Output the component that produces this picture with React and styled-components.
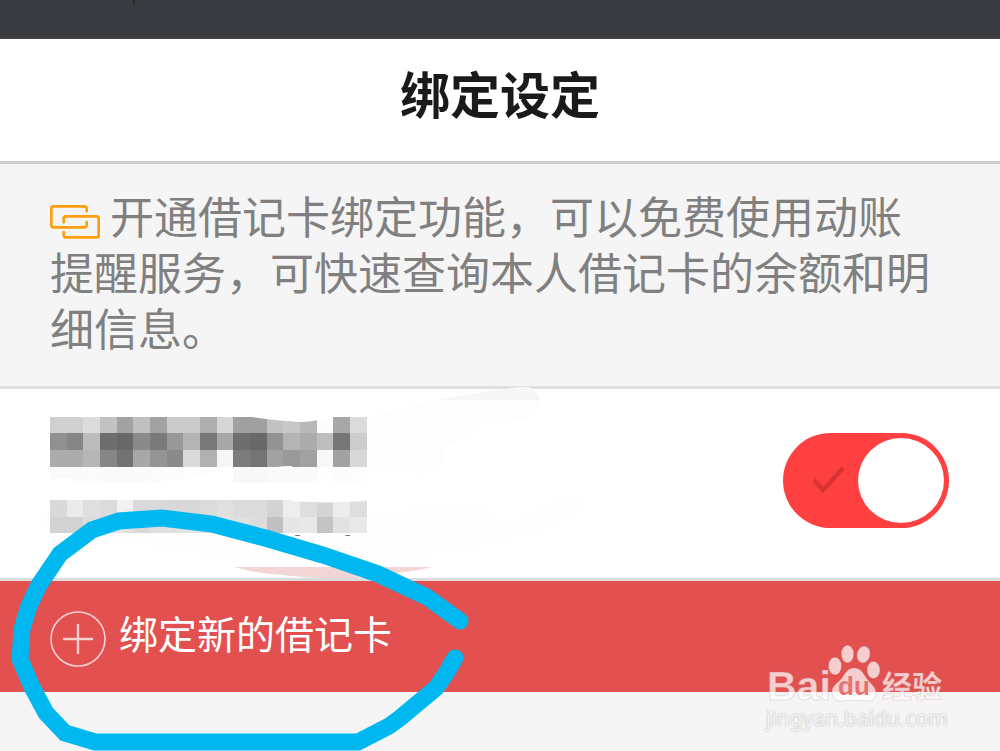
import React, { useState } from 'react';
import styled, { createGlobalStyle } from 'styled-components';

const GlobalStyle = createGlobalStyle`
  * {
    box-sizing: border-box;
  }

  body {
    margin: 0;
    background-color: #f5f5f5;
    font-family: "Noto Sans CJK SC", "Noto Sans", sans-serif;
  }
`;

const Page = styled.div`
  position: relative;
  min-height: 100vh;
  overflow: hidden;
  background-color: #f5f5f5;
`;

const StatusBar = styled.div`
  height: 39px;
  padding-left: 133px;
  background-color: #3a3b40;
  border-bottom: 1px solid #4b4850;

  /* camera notch line */
  &::before {
    content: "";
    display: block;
    width: 2px;
    height: 5px;
    background-color: #2c2d31;
  }
`;

const Header = styled.header`
  padding: 16px 50px 32px;
  background-color: #fff;
  border-bottom: 3px solid #cdcdcd;
`;

const Title = styled.h1`
  margin: 0;
  color: #1a1a1a;
  font-size: 50px;
  font-weight: 700;
  line-height: 74px;
  text-align: center;
`;

const Notice = styled.p`
  margin: 0;
  padding: 23px 56px 31px 50px;
  color: #808080;
  font-size: 44px;
  line-height: 56px;
  border-bottom: 3px solid #dfdfdf;

  svg {
    margin-right: 10px;
    vertical-align: -5px;
  }
`;

const CardRow = styled.section`
  display: flex;
  align-items: center;
  justify-content: space-between;
  padding: 0 51px 0 50px;
  background-color: #fff;
  border-bottom: 3px solid #dcdcdc;
`;

const Switch = styled.label`
  display: grid;
  flex: none;
  margin-bottom: 6px;
  cursor: pointer;

  > * {
    grid-area: 1 / 1;
  }

  svg {
    align-self: center;
    margin-left: 29px;
    pointer-events: none;
  }
`;

const SwitchInput = styled.input`
  appearance: none;
  display: flex;
  align-items: center;
  justify-content: flex-start;
  width: 166px;
  height: 95px;
  margin: 0;
  padding: 5px;
  border-radius: 48px;
  background-color: #ccc;
  cursor: pointer;

  &::before {
    content: "";
    width: 86px;
    height: 85px;
    border-radius: 50%;
    background-color: #fff;
  }

  &:checked {
    justify-content: flex-end;
    background-color: #ff4041;
  }
`;

const AddButton = styled.button`
  display: flex;
  align-items: center;
  gap: 13px;
  width: 100%;
  height: 111px;
  padding: 4px 50px 0;
  border: none;
  background-color: #e2504f;
  color: #fff;
  font-family: inherit;
  font-size: 39px;
  line-height: 56px;
  text-align: left;
  cursor: pointer;

  span {
    padding-bottom: 14px;
  }
`;

const PenStroke = styled.svg`
  position: absolute;
  top: 0;
  left: 0;
  pointer-events: none;
`;

const Watermark = styled.div`
  position: absolute;
  top: 642px;
  right: 50px;
  width: 184px;
  pointer-events: none;
`;

const WatermarkUrl = styled.div`
  margin-top: -20px;
  color: rgba(255, 255, 255, 0.8);
  font-family: "Noto Sans", sans-serif;
  font-size: 21px;
  line-height: 30px;
  text-shadow: 0 0 2px rgba(0, 0, 0, 0.3);
`;

// grey level of every mosaic cell, two hex digits each
const nameCells = [
  'd0 d0 dc c2 a2 c0 a2 cb cb ae d6 a0 a0 c2 c8 b8 fc a8 dc',
  '90 86 bc 6e 68 8a 7a 98 b4 78 a8 6e 68 92 b4 ac be 76 cc',
  'ac ac b6 86 72 a8 94 8a da b0 f6 7c 74 a2 9a a2 f8 a2 d8',
  'fa fa fb fa fa fa fb fc fd fd fe f8 f8 fa fa fa fe fc fd',
];

const numberCells = [
  'd9 eb df db f2 d9 d9 d8 d8 dc e0 db db d3 ee de d4 ec dd',
  'd2 d2 dd de e2 d8 de e0 e4 e2 e2 e0 dc c0 e6 e8 c4 e2 e9',
];

const Mosaic = ({ rows, y }) =>
  rows.map((row, r) =>
    row.split(' ').map((level, c) => (
      <rect
        key={`${r}-${c}`}
        x={60 + c * 50}
        y={y + r * 50}
        width="50"
        height="50"
        fill={`#${level}${level}${level}`}
      />
    ))
  );

const HiddenCard = () => (
  <svg width="540" height="189" viewBox="60 27 1620 567" overflow="visible" role="img" aria-label="已隐藏的卡号">
    <path d="M990 120 C1120 80 1300 40 1480 21 Q1525 21 1530 60 Q1530 110 1480 120 L1350 135 Q1300 190 1250 200 Q1240 280 1180 283 L1010 270Z" fill="#fdfdfd" />
    <path d="M1222 60 Q1360 30 1480 21 Q1520 22 1530 60Z" fill="#f7f7f7" />
    <path d="M30 400 Q40 470 90 480 L260 485 L620 545 L1060 545 Q1500 500 1650 400 Q1670 330 1600 350 L1410 430 Q1400 370 1340 377 L1010 390Z" fill="#fefefe" />
    <g shapeRendering="crispEdges">
      <Mosaic rows={nameCells} y={110} />
      <Mosaic rows={numberCells} y={360} />
    </g>
    <path d="M650 108 Q700 118 780 124 Q825 129 860 121 L930 108Z" fill="#fff" />
    <path d="M60 298 L110 292 L155 311 L340 311 Q460 298 610 268 L610 314 L60 314Z" fill="#fff" />
    <path d="M700 266 L760 259 L790 258 L770 267Z" fill="#fff" />
    <path d="M785 359 L1012 359 L1012 363 Q900 371 785 364Z" fill="#fff" />
    <rect x="796" y="465" width="14" height="3" fill="#777" />
    <rect x="946" y="465" width="14" height="3" fill="#777" />
    <path d="M612 561 H1208 Q1150 575 1090 580 Q1000 602 820 591 Q700 580 660 573Z" fill="#f3d5d5" />
  </svg>
);

const LinkIcon = () => (
  <svg width="50" height="34" viewBox="60 46 150 102" fill="none" stroke="#ff9d0c" strokeWidth="8" strokeLinecap="round">
    <path d="M170 65 V57 Q170 50 163 50 H71 Q64 50 64 57 V106 Q64 113 71 113 H163 Q170 113 170 106 V97" />
    <path d="M101 98 V87 Q101 80 108 80 H199 Q206 80 206 87 V136 Q206 143 199 143 H108 Q101 143 101 136 V127" />
  </svg>
);

const PlusIcon = () => (
  <svg width="56" height="56" viewBox="0 0 56 56" fill="none" stroke="#f8d0cf">
    <circle cx="28" cy="28" r="27" strokeWidth="1.6" />
    <path d="M13 28 H43 M28 13 V43" strokeWidth="2.4" />
  </svg>
);

const PawLogo = () => (
  <svg width="184" height="76" viewBox="0 0 184 76" overflow="visible" fill="#fff">
    <g opacity="0.72" stroke="#b98a8a" strokeOpacity="0.35" strokeWidth="1">
      <text x="1" y="58" fontFamily="Liberation Sans, sans-serif" fontSize="41" fontWeight="700">Bai</text>
      <ellipse cx="69" cy="24" rx="6.5" ry="8.7" />
      <ellipse cx="81.5" cy="12" rx="6.2" ry="8.7" />
      <ellipse cx="97.5" cy="12.5" rx="6.5" ry="8.5" transform="rotate(12 97.5 12.5)" />
      <ellipse cx="107.5" cy="28" rx="6.5" ry="8.5" />
      <path d="M88 26 C82 26 79 31 76 36 C72 41 65 44 66 51 C67 57 71 60 77 59 C84 58 92 58 99 59 C105 60 110 57 110 51 C110 45 105 42 101 37 C97 31 95 26 88 26Z" />
      <text x="116" y="55" fontSize="30" fontWeight="700">经验</text>
    </g>
    <text x="72" y="53" fontFamily="Liberation Sans, sans-serif" fontSize="26" fontWeight="700" fill="#e27573">du</text>
  </svg>
);

const App = () => {
  const [bound, setBound] = useState(true);

  return (
    <Page lang="zh-CN">
      <GlobalStyle />
      <StatusBar />
      <Header>
        <Title>绑定设定</Title>
      </Header>
      <Notice>
        <LinkIcon />
        开通借记卡绑定功能，可以免费使用动账提醒服务，可快速查询本人借记卡的余额和明细信息。
      </Notice>
      <CardRow>
        <HiddenCard />
        <Switch>
          <SwitchInput
            type="checkbox"
            aria-label="绑定"
            checked={bound}
            onChange={(e) => setBound(e.target.checked)}
          />
          {bound && (
            <svg width="34" height="30" viewBox="0 0 34 30" fill="none" stroke="#d93232" strokeWidth="4.5">
              <path d="M2 14 L11 24 L31 2" />
            </svg>
          )}
        </Switch>
      </CardRow>
      <AddButton type="button">
        <PlusIcon />
        <span>绑定新的借记卡</span>
      </AddButton>
      <PenStroke width="1000" height="751" viewBox="0 0 1000 751" aria-hidden="true">
        <polyline
          points="460,621 427,597 378,574 323,555 265,538 212,524 162,518 119,521 92,530 60,554 39,585 29,606 22,629 20,659 32,687 46,713 65,733 95,742 358,742 389,726 400,718 418,703 436,688 447,672 455,658"
          fill="none"
          stroke="#00b7ef"
          strokeWidth="17"
          strokeLinecap="round"
        />
      </PenStroke>
      <Watermark>
        <PawLogo />
        <WatermarkUrl>jingyan.baidu.com</WatermarkUrl>
      </Watermark>
    </Page>
  );
};

export default App;
